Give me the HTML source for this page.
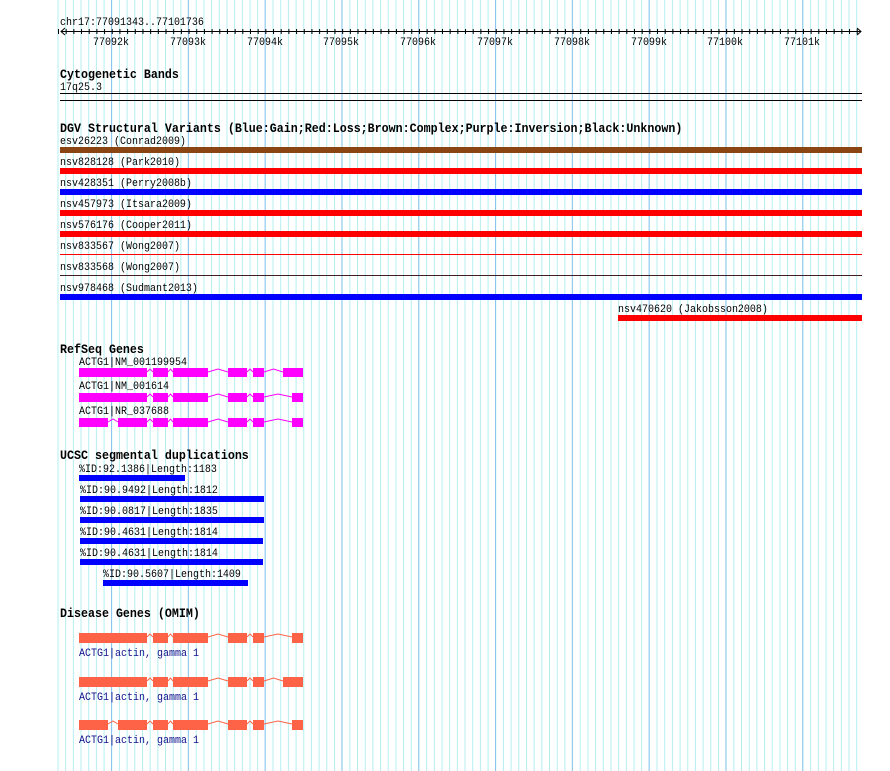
<!DOCTYPE html>
<html><head><meta charset="utf-8"><style>
html,body{margin:0;padding:0;background:#fff;width:890px;height:771px;overflow:hidden}
svg{display:block}
text{font-family:"Liberation Mono",monospace;font-size:11.5px;fill:#000}
text.b{font-weight:bold;font-size:12.5px}
.o{fill:#10108a}
</style></head><body>
<svg width="890" height="771" viewBox="0 0 890 771" xmlns="http://www.w3.org/2000/svg">
<defs>
<pattern id="mn" x="57.5" y="0" width="7.68" height="771" patternUnits="userSpaceOnUse"><rect x="0" y="0" width="1" height="771" fill="#b4eef0"/></pattern>
<pattern id="mj" x="111" y="0" width="76.8" height="771" patternUnits="userSpaceOnUse"><rect x="0" y="0" width="1" height="771" fill="#8cc4ee"/></pattern>
</defs>
<rect x="57.5" y="0" width="801" height="771" fill="url(#mn)"/>
<rect x="111" y="0" width="748" height="771" fill="url(#mj)"/>

<text transform="translate(60,25) scale(.87,1)">chr17:77091343..77101736</text>
<line x1="61" y1="31.5" x2="861" y2="31.5" stroke="#000" stroke-width="1"/>
<line x1="58" y1="31.5" x2="858" y2="31.5" stroke="#000" stroke-width="5" stroke-dasharray="1 6.68"/>
<polyline points="65,28 61,31.5 65,35" fill="none" stroke="#000"/>
<polyline points="857,28 861,31.5 857,35" fill="none" stroke="#000"/>
<g text-anchor="middle">
<text transform="translate(111,45) scale(.87,1)">77092k</text><text transform="translate(188,45) scale(.87,1)">77093k</text><text transform="translate(265,45) scale(.87,1)">77094k</text><text transform="translate(341,45) scale(.87,1)">77095k</text><text transform="translate(418,45) scale(.87,1)">77096k</text><text transform="translate(495,45) scale(.87,1)">77097k</text><text transform="translate(572,45) scale(.87,1)">77098k</text><text transform="translate(649,45) scale(.87,1)">77099k</text><text transform="translate(725,45) scale(.87,1)">77100k</text><text transform="translate(802,45) scale(.87,1)">77101k</text>
</g>

<text class="b" transform="translate(60,78) scale(.933,1)">Cytogenetic Bands</text>
<text transform="translate(60,90) scale(.87,1)">17q25.3</text>
<rect x="60" y="93" width="802" height="1" fill="#000"/>
<rect x="60" y="100" width="802" height="1" fill="#000"/>

<text class="b" transform="translate(60,132) scale(.933,1)">DGV Structural Variants (Blue:Gain;Red:Loss;Brown:Complex;Purple:Inversion;Black:Unknown)</text>
<text transform="translate(60,144) scale(.87,1)">esv26223 (Conrad2009)</text><rect x="60" y="147" width="802" height="6" fill="#8b4513"/>
<text transform="translate(60,165) scale(.87,1)">nsv828128 (Park2010)</text><rect x="60" y="168" width="802" height="6" fill="#ff0000"/>
<text transform="translate(60,186) scale(.87,1)">nsv428351 (Perry2008b)</text><rect x="60" y="189" width="802" height="6" fill="#0000ff"/>
<text transform="translate(60,207) scale(.87,1)">nsv457973 (Itsara2009)</text><rect x="60" y="210" width="802" height="6" fill="#ff0000"/>
<text transform="translate(60,228) scale(.87,1)">nsv576176 (Cooper2011)</text><rect x="60" y="231" width="802" height="6" fill="#ff0000"/>
<text transform="translate(60,249) scale(.87,1)">nsv833567 (Wong2007)</text><rect x="60" y="254" width="802" height="1" fill="#ff0000"/>
<text transform="translate(60,270) scale(.87,1)">nsv833568 (Wong2007)</text><rect x="60" y="275" width="802" height="1" fill="#402020"/>
<text transform="translate(60,291) scale(.87,1)">nsv978468 (Sudmant2013)</text><rect x="60" y="294" width="802" height="6" fill="#0000ff"/>
<text transform="translate(618,312) scale(.87,1)">nsv470620 (Jakobsson2008)</text><rect x="618" y="315" width="244" height="6" fill="#ff0000"/>

<text class="b" transform="translate(60,353) scale(.933,1)">RefSeq Genes</text>
<text transform="translate(79,365) scale(.87,1)">ACTG1|NM_001199954</text>
<text transform="translate(79,389) scale(.87,1)">ACTG1|NM_001614</text>
<text transform="translate(79,414) scale(.87,1)">ACTG1|NR_037688</text>
<g fill="#ff00ff">
<rect x="79" y="368" width="68" height="9"/><rect x="153" y="368" width="15" height="9"/><rect x="173" y="368" width="35" height="9"/><rect x="228" y="368" width="19" height="9"/><rect x="253" y="368" width="11" height="9"/><rect x="283" y="368" width="20" height="9"/>
<rect x="79" y="393" width="68" height="9"/><rect x="153" y="393" width="15" height="9"/><rect x="173" y="393" width="35" height="9"/><rect x="228" y="393" width="19" height="9"/><rect x="253" y="393" width="11" height="9"/><rect x="292" y="393" width="11" height="9"/>
<rect x="79" y="418" width="29" height="9"/><rect x="118" y="418" width="29" height="9"/><rect x="153" y="418" width="15" height="9"/><rect x="173" y="418" width="35" height="9"/><rect x="228" y="418" width="19" height="9"/><rect x="253" y="418" width="11" height="9"/><rect x="292" y="418" width="11" height="9"/>
</g>
<g fill="none" stroke="#ff00ff">
<polyline points="147,372 150,369 153,372"/><polyline points="168,372 170.5,369 173,372"/><polyline points="208,372 218,369 228,372"/><polyline points="247,372 250,369 253,372"/><polyline points="264,372 273.5,369 283,372"/>
<polyline points="147,397 150,394 153,397"/><polyline points="168,397 170.5,394 173,397"/><polyline points="208,397 218,394 228,397"/><polyline points="247,397 250,394 253,397"/><polyline points="264,397 278,394 292,397"/>
<polyline points="108,422 113,419 118,422"/><polyline points="147,422 150,419 153,422"/><polyline points="168,422 170.5,419 173,422"/><polyline points="208,422 218,419 228,422"/><polyline points="247,422 250,419 253,422"/><polyline points="264,422 278,419 292,422"/>
</g>

<text class="b" transform="translate(60,459) scale(.933,1)">UCSC segmental duplications</text>
<text transform="translate(79,472) scale(.87,1)">%ID:92.1386|Length:1183</text><rect x="79" y="475" width="106" height="6" fill="#0000ff"/>
<text transform="translate(80,493) scale(.87,1)">%ID:90.9492|Length:1812</text><rect x="80" y="496" width="184" height="6" fill="#0000ff"/>
<text transform="translate(80,514) scale(.87,1)">%ID:90.0817|Length:1835</text><rect x="80" y="517" width="184" height="6" fill="#0000ff"/>
<text transform="translate(80,535) scale(.87,1)">%ID:90.4631|Length:1814</text><rect x="80" y="538" width="183" height="6" fill="#0000ff"/>
<text transform="translate(80,556) scale(.87,1)">%ID:90.4631|Length:1814</text><rect x="80" y="559" width="183" height="6" fill="#0000ff"/>
<text transform="translate(103,577) scale(.87,1)">%ID:90.5607|Length:1409</text><rect x="103" y="580" width="145" height="6" fill="#0000ff"/>

<text class="b" transform="translate(60,617) scale(.933,1)">Disease Genes (OMIM)</text>
<g fill="#ff6347">
<rect x="79" y="633" width="68" height="10"/><rect x="153" y="633" width="15" height="10"/><rect x="173" y="633" width="35" height="10"/><rect x="228" y="633" width="19" height="10"/><rect x="253" y="633" width="11" height="10"/><rect x="292" y="633" width="11" height="10"/>
<rect x="79" y="677" width="68" height="10"/><rect x="153" y="677" width="15" height="10"/><rect x="173" y="677" width="35" height="10"/><rect x="228" y="677" width="19" height="10"/><rect x="253" y="677" width="11" height="10"/><rect x="283" y="677" width="20" height="10"/>
<rect x="79" y="720" width="29" height="10"/><rect x="118" y="720" width="29" height="10"/><rect x="153" y="720" width="15" height="10"/><rect x="173" y="720" width="35" height="10"/><rect x="228" y="720" width="19" height="10"/><rect x="253" y="720" width="11" height="10"/><rect x="292" y="720" width="11" height="10"/>
</g>
<g fill="none" stroke="#ff6347">
<polyline points="147,637 150,634 153,637"/><polyline points="168,637 170.5,634 173,637"/><polyline points="208,637 218,634 228,637"/><polyline points="247,637 250,634 253,637"/><polyline points="264,637 278,634 292,637"/>
<polyline points="147,681 150,678 153,681"/><polyline points="168,681 170.5,678 173,681"/><polyline points="208,681 218,678 228,681"/><polyline points="247,681 250,678 253,681"/><polyline points="264,681 273.5,678 283,681"/>
<polyline points="108,724 113,721 118,724"/><polyline points="147,724 150,721 153,724"/><polyline points="168,724 170.5,721 173,724"/><polyline points="208,724 218,721 228,724"/><polyline points="247,724 250,721 253,724"/><polyline points="264,724 278,721 292,724"/>
</g>
<text class="o" transform="translate(79,656) scale(.87,1)">ACTG1|actin, gamma 1</text>
<text class="o" transform="translate(79,700) scale(.87,1)">ACTG1|actin, gamma 1</text>
<text class="o" transform="translate(79,743) scale(.87,1)">ACTG1|actin, gamma 1</text>
</svg>
</body></html>
